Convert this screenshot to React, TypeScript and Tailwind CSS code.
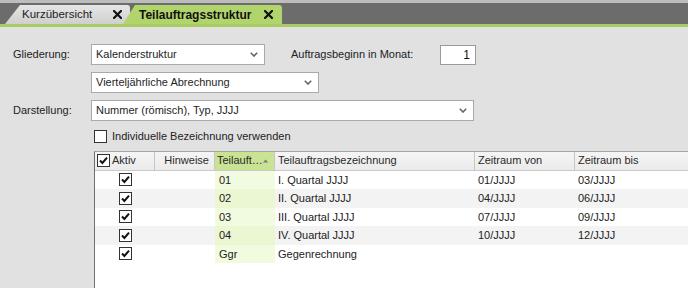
import React from "react";

type Row = {
  nr: string;
  name: string;
  von: string;
  bis: string;
};

const rows: Row[] = [
  { nr: "01", name: "I. Quartal JJJJ", von: "01/JJJJ", bis: "03/JJJJ" },
  { nr: "02", name: "II. Quartal JJJJ", von: "04/JJJJ", bis: "06/JJJJ" },
  { nr: "03", name: "III. Quartal JJJJ", von: "07/JJJJ", bis: "09/JJJJ" },
  { nr: "04", name: "IV. Quartal JJJJ", von: "10/JJJJ", bis: "12/JJJJ" },
  { nr: "Ggr", name: "Gegenrechnung", von: "", bis: "" },
];

function CloseX() {
  return (
    <svg width="9" height="9" viewBox="0 0 9 9" className="shrink-0">
      <path d="M1 1 L8 8 M8 1 L1 8" stroke="#111" strokeWidth="2.2" strokeLinecap="square" />
    </svg>
  );
}

function Chevron() {
  return (
    <svg width="8" height="5" viewBox="0 0 8 5" className="shrink-0">
      <path d="M0.8 0.8 L4 4 L7.2 0.8" fill="none" stroke="#666" strokeWidth="1.6" />
    </svg>
  );
}

function Check({ checked, size = 13 }: { checked: boolean; size?: number }) {
  return (
    <span
      className="flex shrink-0 items-center justify-center border border-[#333] bg-white"
      style={{ width: size, height: size }}
    >
      {checked ? (
        <svg width="11" height="11" viewBox="0 0 11 11">
          <path d="M2 5.5 L4.4 8 L9 2.6" fill="none" stroke="#111" strokeWidth="2" />
        </svg>
      ) : null}
    </span>
  );
}

function Select({ width, value }: { width: string; value: string }) {
  return (
    <div
      className={`flex h-[21px] items-center justify-between border border-[#a9a9a9] bg-white pl-[4px] pr-[6px] text-[#1e1e1e] ${width}`}
    >
      <span>{value}</span>
      <Chevron />
    </div>
  );
}

export default function App() {
  return (
    <div className="flex h-[288px] w-[688px] flex-col overflow-hidden bg-[#e1e1e1] font-['Liberation_Sans',Arial,sans-serif] text-[11px] text-[#222]">
      {/* tab strip */}
      <div className="h-[3px] bg-[#bdbdbd]" />
      <div className="flex h-[21px] items-end bg-[#6c6c6c] pl-[5px]">
        <div className="flex h-[19px] w-[125px] items-center rounded-tr-[3px] bg-gradient-to-b from-[#e6e6e6] to-[#cfcfcf] pl-[17px] pr-[8px] text-[11.5px] [clip-path:polygon(15px_0,100%_0,100%_100%,0_100%)]">
          <span className="flex-1">Kurzübersicht</span>
          <CloseX />
        </div>
        <div className="ml-[-7px] flex h-[19px] w-[159px] items-center rounded-tr-[3px] bg-[#b2d46c] pl-[16px] pr-[9px] text-[12px] [clip-path:polygon(12px_0,100%_0,100%_100%,0_100%)]">
          <span className="flex-1 font-bold text-[#111]">Teilauftragsstruktur</span>
          <CloseX />
        </div>
      </div>
      <div className="h-[3px] bg-[#a9cc62]" />

      {/* form */}
      <div className="mt-[17px] flex items-center">
        <span className="w-[91px] pl-[13px]">Gliederung:</span>
        <Select width="w-[174px]" value="Kalenderstruktur" />
        <span className="ml-[26px] w-[149px]">Auftragsbeginn in Monat:</span>
        <div className="flex h-[20px] w-[36px] items-center justify-end border border-[#9a9a9a] bg-white pr-[5px] text-[12px] text-[#111]">
          1
        </div>
      </div>
      <div className="mt-[7px] flex items-center pl-[91px]">
        <Select width="w-[228px]" value="Vierteljährliche Abrechnung" />
      </div>
      <div className="mt-[7px] flex items-center">
        <span className="w-[91px] pl-[13px]">Darstellung:</span>
        <Select width="w-[383px]" value="Nummer (römisch), Typ, JJJJ" />
      </div>
      <div className="mt-[7px] flex items-center gap-[5px] pl-[94px]">
        <span className="h-[13px] w-[13px] border border-[#333] bg-white" />
        <span>Individuelle Bezeichnung verwenden</span>
      </div>

      {/* grid */}
      <div className="ml-[94px] mt-[6px] flex-1 border-l border-t border-l-[#6f6f6f] border-t-[#a5a5a5] bg-white">
        <div className="flex h-[19px] border-b border-[#c9c9c9] bg-gradient-to-b from-[#f5f5f5] to-[#ebebeb] text-[#2a2a2a]">
          <div className="flex w-[60px] items-center gap-[2px] border-r border-[#c6c6c6] pl-[2px]">
            <Check checked size={13} />
            <span>Aktiv</span>
          </div>
          <div className="flex w-[60px] items-center justify-end border-r border-[#c6c6c6] pr-[5px]">Hinweise</div>
          <div className="flex w-[60px] items-center justify-between border-r border-[#c6c6c6] bg-[#c9e394] pl-[2px] pr-[6px]">
            <span>Teilauft…</span>
            <svg width="7" height="4" viewBox="0 0 7 4">
              <path d="M0 4 L3.5 0 L7 4 Z" fill="#7a7a7a" />
            </svg>
          </div>
          <div className="flex w-[200px] items-center border-r border-[#c6c6c6] pl-[3px]">Teilauftragsbezeichnung</div>
          <div className="flex w-[100px] items-center border-r border-[#c6c6c6] pl-[3px]">Zeitraum von</div>
          <div className="flex flex-1 items-center pl-[3px]">Zeitraum bis</div>
        </div>
        {rows.map((row, i) => (
          <div key={row.nr} className={`flex h-[18.5px] ${i % 2 === 1 ? "bg-[#f3f3f3]" : "bg-white"}`}>
            <div className="flex w-[60px] items-center justify-center pl-[1px]">
              <Check checked />
            </div>
            <div className="w-[60px]" />
            <div className={`flex w-[60px] items-center pl-[4px] ${i % 2 === 1 ? "bg-[#eaf7d2]" : "bg-[#f1fbdf]"}`}>{row.nr}</div>
            <div className="flex w-[200px] items-center pl-[3px]">{row.name}</div>
            <div className="flex w-[100px] items-center pl-[3px]">{row.von}</div>
            <div className="flex flex-1 items-center pl-[3px]">{row.bis}</div>
          </div>
        ))}
      </div>
    </div>
  );
}
